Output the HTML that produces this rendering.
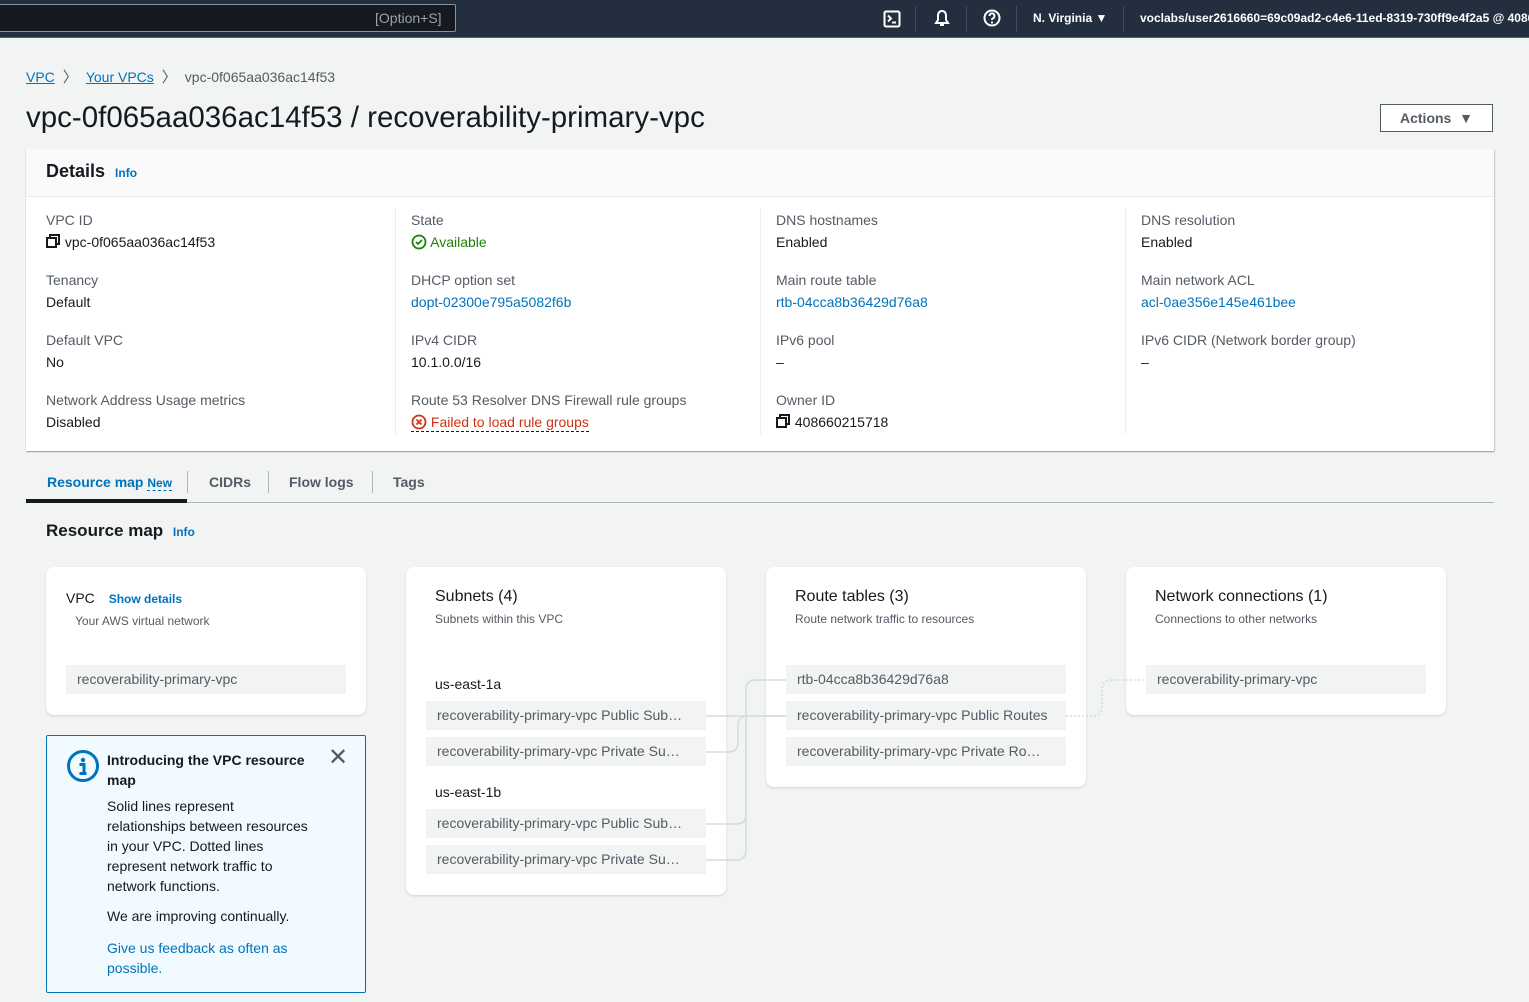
<!DOCTYPE html>
<html><head><meta charset="utf-8"><style>
*{box-sizing:border-box;margin:0;padding:0}
body{width:1529px;height:1002px;background:#f2f3f3;font-family:"Liberation Sans",sans-serif;font-size:14px;color:#16191f;position:relative;overflow:hidden}
.a{position:absolute;white-space:nowrap}
.top{position:absolute;left:0;top:0;width:1529px;height:38px;background:#232f3e;border-bottom:1px solid #545b64}
.lnk{color:#0073bb}
.lbl{color:#545b64}
.card{position:absolute;background:#fff;border-radius:8px;box-shadow:0 1px 2px rgba(0,28,36,.15)}
.item{position:absolute;height:29px;background:#f2f3f3;color:#545b64;font-size:14px;line-height:29px;padding-left:11px;white-space:nowrap;overflow:hidden}
.vd{position:absolute;top:208px;height:226px;border-left:1px solid #eaeded}
</style></head><body>
<div class="top">
 <div class="a" style="left:-2px;top:4px;width:458px;height:28px;background:#16191f;border:1px solid #879596;border-radius:2px"></div>
 <div class="a" style="left:375px;top:10px;color:#95a5a6;font-size:14px">[Option+S]</div>
 <svg class="a" style="left:883px;top:10px" width="18" height="18" viewBox="0 0 18 18"><rect x="1.5" y="1.5" width="15" height="15" rx="1.5" fill="none" stroke="#fff" stroke-width="2"/><path d="M5 5.5l3 3-3 3M9 12.5h4" fill="none" stroke="#fff" stroke-width="2"/></svg>
 <div class="a" style="left:915px;top:6px;height:26px;border-left:1px solid #414d5c"></div>
 <svg class="a" style="left:933px;top:9px" width="18" height="18" viewBox="0 0 18 18"><path d="M9 2c-3 0-4 2.5-4 5v4l-2 3h12l-2-3V7c0-2.5-1-5-4-5zM7 16h4" fill="none" stroke="#fff" stroke-width="2"/></svg>
 <div class="a" style="left:966px;top:6px;height:26px;border-left:1px solid #414d5c"></div>
 <svg class="a" style="left:983px;top:9px" width="18" height="18" viewBox="0 0 18 18"><circle cx="9" cy="9" r="7.5" fill="none" stroke="#fff" stroke-width="2"/><path d="M6.5 7a2.5 2.5 0 1 1 3.5 2.2c-.7.4-1 .8-1 1.8" fill="none" stroke="#fff" stroke-width="2"/><circle cx="9" cy="13.5" r="1.1" fill="#fff"/></svg>
 <div class="a" style="left:1016px;top:6px;height:26px;border-left:1px solid #414d5c"></div>
 <div class="a" style="left:1033px;top:11px;color:#fff;font-size:12px;font-weight:bold">N. Virginia ▼</div>
 <div class="a" style="left:1123px;top:6px;height:26px;border-left:1px solid #414d5c"></div>
 <div class="a" style="left:1140px;top:11px;color:#fff;font-size:12px;font-weight:bold">voclabs/user2616660=69c09ad2-c4e6-11ed-8319-730ff9e4f2a5 @ 408660215718</div>
</div>

<div class="a" style="left:26px;top:66px"><span class="lnk" style="text-decoration:underline">VPC</span><span style="color:#545b64;margin:0 8px;font-size:15px">〉</span><span class="lnk" style="text-decoration:underline">Your VPCs</span><span style="color:#545b64;margin:0 8px;font-size:15px">〉</span><span style="color:#545b64">vpc-0f065aa036ac14f53</span></div>
<div class="a" style="left:26px;top:101px;font-size:29.5px">vpc-0f065aa036ac14f53 / recoverability-primary-vpc</div>
<div class="a" style="left:1380px;top:104px;width:113px;height:28px;border:1px solid #545b64;background:#fff;font-weight:bold;color:#545b64;text-align:center;line-height:26px">Actions &nbsp;▼</div>

<div class="a" style="left:26px;top:149px;width:1468px;height:302px;background:#fff;box-shadow:0 1px 1px 0 rgba(0,28,36,.3),1px 1px 1px 0 rgba(0,28,36,.15)"></div>
<div class="a" style="left:26px;top:149px;width:1468px;height:48px;background:#fafafa;border-bottom:1px solid #eaeded"></div>
<div class="a" style="left:46px;top:161px;font-size:18px;font-weight:bold">Details <span class="lnk" style="font-size:12px;margin-left:5px">Info</span></div>
<div class="vd" style="left:395px"></div><div class="vd" style="left:760px"></div><div class="vd" style="left:1125px"></div>

<div class="a lbl" style="left:46px;top:212px">VPC ID</div>
<div class="a" style="left:46px;top:234px"><svg width="15" height="14" viewBox="0 0 15 14" style="vertical-align:-1px"><rect x="4" y="1" width="9" height="9" fill="none" stroke="#16191f" stroke-width="2"/><rect x="1" y="4" width="9" height="9" fill="#fff" stroke="#16191f" stroke-width="2"/></svg> vpc-0f065aa036ac14f53</div>
<div class="a lbl" style="left:46px;top:272px">Tenancy</div><div class="a" style="left:46px;top:294px">Default</div>
<div class="a lbl" style="left:46px;top:332px">Default VPC</div><div class="a" style="left:46px;top:354px">No</div>
<div class="a lbl" style="left:46px;top:392px">Network Address Usage metrics</div><div class="a" style="left:46px;top:414px">Disabled</div>

<div class="a lbl" style="left:411px;top:212px">State</div>
<div class="a" style="left:411px;top:234px;color:#1d8102"><svg width="16" height="16" viewBox="0 0 16 16" style="vertical-align:-3px"><circle cx="8" cy="8" r="6.5" fill="none" stroke="#1d8102" stroke-width="1.8"/><path d="M5 8l2 2 4-4" fill="none" stroke="#1d8102" stroke-width="1.8"/></svg> Available</div>
<div class="a lbl" style="left:411px;top:272px">DHCP option set</div><div class="a lnk" style="left:411px;top:294px">dopt-02300e795a5082f6b</div>
<div class="a lbl" style="left:411px;top:332px">IPv4 CIDR</div><div class="a" style="left:411px;top:354px">10.1.0.0/16</div>
<div class="a lbl" style="left:411px;top:392px">Route 53 Resolver DNS Firewall rule groups</div>
<div class="a" style="left:411px;top:414px;color:#d13212;border-bottom:1px dashed #16191f;padding-bottom:1px"><svg width="16" height="16" viewBox="0 0 16 16" style="vertical-align:-3px"><circle cx="8" cy="8" r="6.5" fill="none" stroke="#d13212" stroke-width="1.8"/><path d="M5.5 5.5l5 5M10.5 5.5l-5 5" stroke="#d13212" stroke-width="1.8"/></svg> Failed to load rule groups</div>

<div class="a lbl" style="left:776px;top:212px">DNS hostnames</div><div class="a" style="left:776px;top:234px">Enabled</div>
<div class="a lbl" style="left:776px;top:272px">Main route table</div><div class="a lnk" style="left:776px;top:294px">rtb-04cca8b36429d76a8</div>
<div class="a lbl" style="left:776px;top:332px">IPv6 pool</div><div class="a" style="left:776px;top:354px">–</div>
<div class="a lbl" style="left:776px;top:392px">Owner ID</div>
<div class="a" style="left:776px;top:414px"><svg width="15" height="14" viewBox="0 0 15 14" style="vertical-align:-1px"><rect x="4" y="1" width="9" height="9" fill="none" stroke="#16191f" stroke-width="2"/><rect x="1" y="4" width="9" height="9" fill="#fff" stroke="#16191f" stroke-width="2"/></svg> 408660215718</div>

<div class="a lbl" style="left:1141px;top:212px">DNS resolution</div><div class="a" style="left:1141px;top:234px">Enabled</div>
<div class="a lbl" style="left:1141px;top:272px">Main network ACL</div><div class="a lnk" style="left:1141px;top:294px">acl-0ae356e145e461bee</div>
<div class="a lbl" style="left:1141px;top:332px">IPv6 CIDR (Network border group)</div><div class="a" style="left:1141px;top:354px">–</div>

<div class="a" style="left:26px;top:502px;width:1468px;border-top:1px solid #aab7b8"></div>
<div class="a" style="left:26px;top:499px;width:161px;height:4px;background:#16191f"></div>
<div class="a" style="left:47px;top:474px;color:#0073bb;font-weight:bold">Resource map <span style="font-size:12px;border-bottom:1px dashed #0073bb">New</span></div>
<div class="a" style="left:187px;top:471px;height:22px;border-left:1px solid #aab7b8"></div>
<div class="a" style="left:209px;top:474px;color:#545b64;font-weight:bold">CIDRs</div>
<div class="a" style="left:268px;top:471px;height:22px;border-left:1px solid #aab7b8"></div>
<div class="a" style="left:289px;top:474px;color:#545b64;font-weight:bold">Flow logs</div>
<div class="a" style="left:372px;top:471px;height:22px;border-left:1px solid #aab7b8"></div>
<div class="a" style="left:393px;top:474px;color:#545b64;font-weight:bold">Tags</div>

<div class="a" style="left:46px;top:521px;font-size:17px;font-weight:bold">Resource map <span class="lnk" style="font-size:12px;margin-left:5px">Info</span></div>

<div class="card" style="left:46px;top:567px;width:320px;height:148px"></div>
<div class="a" style="left:66px;top:590px">VPC <span class="lnk" style="font-size:12px;font-weight:bold;margin-left:10px">Show details</span></div>
<div class="a lbl" style="left:75px;top:614px;font-size:12px">Your AWS virtual network</div>
<div class="item" style="left:66px;top:665px;width:280px">recoverability-primary-vpc</div>

<div class="card" style="left:406px;top:567px;width:320px;height:328px"></div>
<div class="a" style="left:435px;top:588px;font-size:16px">Subnets (4)</div>
<div class="a lbl" style="left:435px;top:612px;font-size:12px">Subnets within this VPC</div>
<div class="a" style="left:435px;top:676px">us-east-1a</div>
<div class="item" style="left:426px;top:701px;width:280px">recoverability-primary-vpc Public Sub…</div>
<div class="item" style="left:426px;top:737px;width:280px">recoverability-primary-vpc Private Su…</div>
<div class="a" style="left:435px;top:784px">us-east-1b</div>
<div class="item" style="left:426px;top:809px;width:280px">recoverability-primary-vpc Public Sub…</div>
<div class="item" style="left:426px;top:845px;width:280px">recoverability-primary-vpc Private Su…</div>

<div class="card" style="left:766px;top:567px;width:320px;height:220px"></div>
<div class="a" style="left:795px;top:588px;font-size:16px">Route tables (3)</div>
<div class="a lbl" style="left:795px;top:612px;font-size:12px">Route network traffic to resources</div>
<div class="item" style="left:786px;top:665px;width:280px">rtb-04cca8b36429d76a8</div>
<div class="item" style="left:786px;top:701px;width:280px">recoverability-primary-vpc Public Routes</div>
<div class="item" style="left:786px;top:737px;width:280px">recoverability-primary-vpc Private Ro…</div>

<div class="card" style="left:1126px;top:567px;width:320px;height:148px"></div>
<div class="a" style="left:1155px;top:588px;font-size:16px">Network connections (1)</div>
<div class="a lbl" style="left:1155px;top:612px;font-size:12px">Connections to other networks</div>
<div class="item" style="left:1146px;top:665px;width:280px">recoverability-primary-vpc</div>

<svg class="a" style="left:0;top:0" width="1529" height="1002">
<g fill="none" stroke="#d5dbdb" stroke-width="1.5">
<path d="M706 716H786"/>
<path d="M706 752H728q10 0 10-10V726q0-10 10-10H786"/>
<path d="M706 824H736q10 0 10-10V690q0-10 10-10H786"/>
<path d="M706 860H736q10 0 10-10V726"/>
</g>
<path d="M1066 716H1092q10 0 10-10V690q0-10 10-10H1146" fill="none" stroke="#d5dbdb" stroke-width="1.5" stroke-dasharray="2 2"/>
</svg>

<div class="a" style="left:46px;top:735px;width:320px;height:258px;background:#f1faff;border:1px solid #0073bb;border-radius:2px"></div>
<svg class="a" style="left:66px;top:749px" width="34" height="34" viewBox="0 0 34 34"><circle cx="17" cy="17" r="14.5" fill="none" stroke="#0073bb" stroke-width="3"/><circle cx="17" cy="11" r="2.2" fill="#0073bb"/><path d="M13.5 15.5h4.5v9h2.5M13.5 24.5h7" fill="none" stroke="#0073bb" stroke-width="3"/></svg>
<div class="a" style="left:107px;top:750px;font-weight:bold;line-height:20px">Introducing the VPC resource<br>map</div>
<div class="a" style="left:328px;top:745px;font-size:24px;color:#545b64;line-height:26px">✕</div>
<div class="a" style="left:107px;top:796px;line-height:20px">Solid lines represent<br>relationships between resources<br>in your VPC. Dotted lines<br>represent network traffic to<br>network functions.</div>
<div class="a" style="left:107px;top:908px">We are improving continually.</div>
<div class="a lnk" style="left:107px;top:938px;line-height:20px">Give us feedback as often as<br>possible.</div>
</body></html>
